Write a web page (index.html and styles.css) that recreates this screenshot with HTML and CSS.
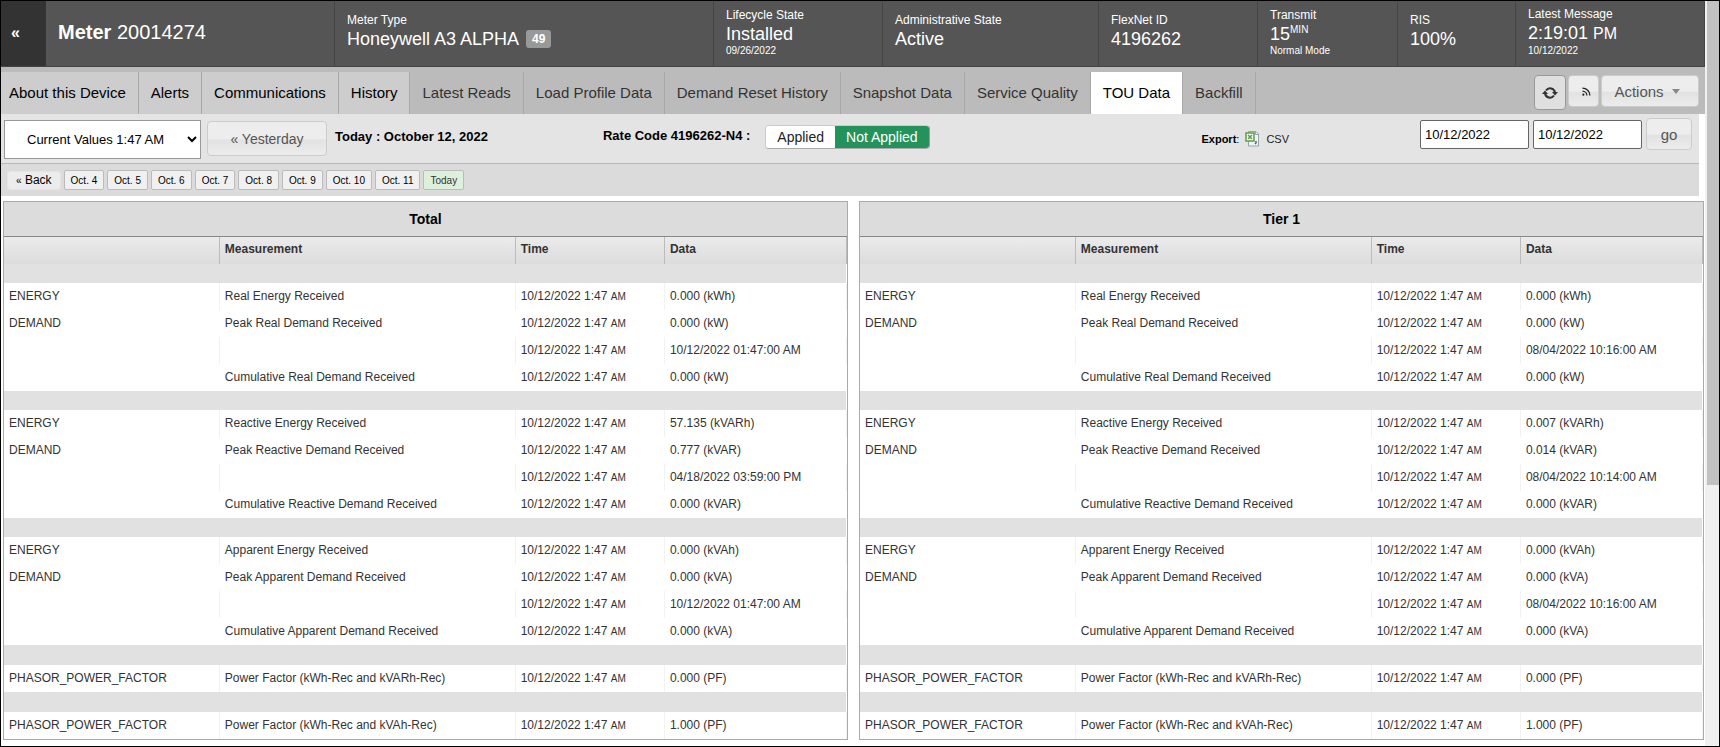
FILE: index.html
```html
<!DOCTYPE html>
<html lang="en">
<head>
<meta charset="utf-8">
<title>Meter 20014274 - TOU Data</title>
<link rel="stylesheet" href="styles.css">
</head>
<body>
<div class="frame">
<div class="page">
  <header class="summary">
    <button class="collapse" type="button" aria-label="Collapse">«</button>
    <div class="fact"><h1 class="meter-name"><b>Meter</b> 20014274</h1></div>
    <div class="fact"><span class="label">Meter Type</span><span class="value">Honeywell A3 ALPHA <span class="badge">49</span></span></div>
    <div class="fact"><span class="label">Lifecycle State</span><span class="value">Installed</span><span class="note">09/26/2022</span></div>
    <div class="fact"><span class="label">Administrative State</span><span class="value">Active</span></div>
    <div class="fact"><span class="label">FlexNet ID</span><span class="value">4196262</span></div>
    <div class="fact"><span class="label">Transmit</span><span class="value">15<sup class="unit">MIN</sup></span><span class="note">Normal Mode</span></div>
    <div class="fact"><span class="label">RIS</span><span class="value">100%</span></div>
    <div class="fact"><span class="label">Latest Message</span><span class="value">2:19:01 <span class="ampm">PM</span></span><span class="note">10/12/2022</span></div>
  </header>

  <nav class="tabbar">
    <div class="tabs">
      <a class="tab main" href="#">About this Device</a>
      <a class="tab main" href="#">Alerts</a>
      <a class="tab main" href="#">Communications</a>
      <a class="tab main" href="#">History</a>
      <a class="tab" href="#">Latest Reads</a>
      <a class="tab" href="#">Load Profile Data</a>
      <a class="tab" href="#">Demand Reset History</a>
      <a class="tab" href="#">Snapshot Data</a>
      <a class="tab" href="#">Service Quality</a>
      <a class="tab active" href="#">TOU Data</a>
      <a class="tab" href="#">Backfill</a>
    </div>
    <div class="tools">
      <button class="btn refresh" type="button" aria-label="Refresh">
        <svg width="16" height="14" viewBox="0 0 16 14" fill="none" stroke="#333" stroke-width="2"><path d="M4 4.500A5 5 0 0 1 13 6.500M12 9.500A5 5 0 0 1 3 7.500"/><path d="M10 6h6L13 9.500zM0 8h6L3 4.500z" fill="#333" stroke="none"/></svg>
      </button>
      <button class="btn feed" type="button" aria-label="Feed">
        <svg width="9" height="9" viewBox="0 0 10 10" fill="none" stroke="#222" stroke-width="1.400"><circle cx="1.500" cy="8.500" r="1.200" fill="#222" stroke="none"/><path d="M0.500 4.500A5 5 0 0 1 5.500 9.500M0.500 1.200A8.300 8.300 0 0 1 8.800 9.500"/></svg>
      </button>
      <button class="btn actions" type="button">Actions <svg width="8" height="5" viewBox="0 0 8 5"><path d="M0 0h8L4 5z" fill="#888"/></svg></button>
    </div>
  </nav>

  <div class="filters">
    <select class="values" aria-label="Values"><option>Current Values 1:47 AM</option></select>
    <button class="btn yesterday" type="button">« Yesterday</button>
    <strong class="today">Today : October 12, 2022</strong>
    <div class="rate">
      <strong>Rate Code 4196262-N4 :</strong>
      <div class="toggle"><button type="button">Applied</button><button class="on" type="button">Not Applied</button></div>
    </div>
    <div class="export"><span><b>Export</b>:</span>
      <a class="csv" href="#"><svg width="15" height="17" viewBox="0 0 15 17"><path d="M3.500 1.500h7.500l2.500 2.500v12H3.500z" fill="#eef3f6" stroke="#91a5ab"/><path d="M10.500 1.500v3h3" fill="none" stroke="#91a5ab"/><rect x="1" y="3" width="8" height="8" fill="#fff" stroke="#5d9b4a" stroke-width="1.500"/><path d="M3 5l4 4M7 5L3 9" stroke="#5d9b4a" stroke-width="1.500"/><path d="M11 11v2l-1 1" stroke="#4f6a75" stroke-width="1.500" fill="none"/></svg>CSV</a>
    </div>
    <form class="range">
      <input type="text" value="10/12/2022" aria-label="From date">
      <input type="text" value="10/12/2022" aria-label="To date">
      <button class="btn go" type="button">go</button>
    </form>
  </div>

  <div class="days">
    <button class="back" type="button"><small>«</small> Back</button>
    <button class="day" type="button">Oct. 4</button>
    <button class="day" type="button">Oct. 5</button>
    <button class="day" type="button">Oct. 6</button>
    <button class="day" type="button">Oct. 7</button>
    <button class="day" type="button">Oct. 8</button>
    <button class="day" type="button">Oct. 9</button>
    <button class="day" type="button">Oct. 10</button>
    <button class="day" type="button">Oct. 11</button>
    <button class="day current" type="button">Today</button>
  </div>

  <main class="panels">
    <table class="readings">
      <colgroup><col class="c-kind"><col class="c-measure"><col class="c-time"><col class="c-data"></colgroup>
      <thead>
        <tr class="title"><th colspan="4">Total</th></tr>
        <tr class="heads"><th></th><th>Measurement</th><th>Time</th><th>Data</th></tr>
      </thead>
      <tbody>
        <tr class="gap"><td colspan="4"></td></tr>
        <tr><td>ENERGY</td><td>Real Energy Received</td><td>10/12/2022 1:47 <small>AM</small></td><td>0.000 (kWh)</td></tr>
        <tr><td>DEMAND</td><td>Peak Real Demand Received</td><td>10/12/2022 1:47 <small>AM</small></td><td>0.000 (kW)</td></tr>
        <tr><td></td><td></td><td>10/12/2022 1:47 <small>AM</small></td><td>10/12/2022 01:47:00 AM</td></tr>
        <tr><td></td><td>Cumulative Real Demand Received</td><td>10/12/2022 1:47 <small>AM</small></td><td>0.000 (kW)</td></tr>
      </tbody>
      <tbody>
        <tr class="gap"><td colspan="4"></td></tr>
        <tr><td>ENERGY</td><td>Reactive Energy Received</td><td>10/12/2022 1:47 <small>AM</small></td><td>57.135 (kVARh)</td></tr>
        <tr><td>DEMAND</td><td>Peak Reactive Demand Received</td><td>10/12/2022 1:47 <small>AM</small></td><td>0.777 (kVAR)</td></tr>
        <tr><td></td><td></td><td>10/12/2022 1:47 <small>AM</small></td><td>04/18/2022 03:59:00 PM</td></tr>
        <tr><td></td><td>Cumulative Reactive Demand Received</td><td>10/12/2022 1:47 <small>AM</small></td><td>0.000 (kVAR)</td></tr>
      </tbody>
      <tbody>
        <tr class="gap"><td colspan="4"></td></tr>
        <tr><td>ENERGY</td><td>Apparent Energy Received</td><td>10/12/2022 1:47 <small>AM</small></td><td>0.000 (kVAh)</td></tr>
        <tr><td>DEMAND</td><td>Peak Apparent Demand Received</td><td>10/12/2022 1:47 <small>AM</small></td><td>0.000 (kVA)</td></tr>
        <tr><td></td><td></td><td>10/12/2022 1:47 <small>AM</small></td><td>10/12/2022 01:47:00 AM</td></tr>
        <tr><td></td><td>Cumulative Apparent Demand Received</td><td>10/12/2022 1:47 <small>AM</small></td><td>0.000 (kVA)</td></tr>
      </tbody>
      <tbody class="single">
        <tr class="gap"><td colspan="4"></td></tr>
        <tr><td>PHASOR_POWER_FACTOR</td><td>Power Factor (kWh-Rec and kVARh-Rec)</td><td>10/12/2022 1:47 <small>AM</small></td><td>0.000 (PF)</td></tr>
      </tbody>
      <tbody class="single">
        <tr class="gap"><td colspan="4"></td></tr>
        <tr><td>PHASOR_POWER_FACTOR</td><td>Power Factor (kWh-Rec and kVAh-Rec)</td><td>10/12/2022 1:47 <small>AM</small></td><td>1.000 (PF)</td></tr>
      </tbody>
    </table>

    <table class="readings">
      <colgroup><col class="c-kind"><col class="c-measure"><col class="c-time"><col class="c-data"></colgroup>
      <thead>
        <tr class="title"><th colspan="4">Tier 1</th></tr>
        <tr class="heads"><th></th><th>Measurement</th><th>Time</th><th>Data</th></tr>
      </thead>
      <tbody>
        <tr class="gap"><td colspan="4"></td></tr>
        <tr><td>ENERGY</td><td>Real Energy Received</td><td>10/12/2022 1:47 <small>AM</small></td><td>0.000 (kWh)</td></tr>
        <tr><td>DEMAND</td><td>Peak Real Demand Received</td><td>10/12/2022 1:47 <small>AM</small></td><td>0.000 (kW)</td></tr>
        <tr><td></td><td></td><td>10/12/2022 1:47 <small>AM</small></td><td>08/04/2022 10:16:00 AM</td></tr>
        <tr><td></td><td>Cumulative Real Demand Received</td><td>10/12/2022 1:47 <small>AM</small></td><td>0.000 (kW)</td></tr>
      </tbody>
      <tbody>
        <tr class="gap"><td colspan="4"></td></tr>
        <tr><td>ENERGY</td><td>Reactive Energy Received</td><td>10/12/2022 1:47 <small>AM</small></td><td>0.007 (kVARh)</td></tr>
        <tr><td>DEMAND</td><td>Peak Reactive Demand Received</td><td>10/12/2022 1:47 <small>AM</small></td><td>0.014 (kVAR)</td></tr>
        <tr><td></td><td></td><td>10/12/2022 1:47 <small>AM</small></td><td>08/04/2022 10:14:00 AM</td></tr>
        <tr><td></td><td>Cumulative Reactive Demand Received</td><td>10/12/2022 1:47 <small>AM</small></td><td>0.000 (kVAR)</td></tr>
      </tbody>
      <tbody>
        <tr class="gap"><td colspan="4"></td></tr>
        <tr><td>ENERGY</td><td>Apparent Energy Received</td><td>10/12/2022 1:47 <small>AM</small></td><td>0.000 (kVAh)</td></tr>
        <tr><td>DEMAND</td><td>Peak Apparent Demand Received</td><td>10/12/2022 1:47 <small>AM</small></td><td>0.000 (kVA)</td></tr>
        <tr><td></td><td></td><td>10/12/2022 1:47 <small>AM</small></td><td>08/04/2022 10:16:00 AM</td></tr>
        <tr><td></td><td>Cumulative Apparent Demand Received</td><td>10/12/2022 1:47 <small>AM</small></td><td>0.000 (kVA)</td></tr>
      </tbody>
      <tbody class="single">
        <tr class="gap"><td colspan="4"></td></tr>
        <tr><td>PHASOR_POWER_FACTOR</td><td>Power Factor (kWh-Rec and kVARh-Rec)</td><td>10/12/2022 1:47 <small>AM</small></td><td>0.000 (PF)</td></tr>
      </tbody>
      <tbody class="single">
        <tr class="gap"><td colspan="4"></td></tr>
        <tr><td>PHASOR_POWER_FACTOR</td><td>Power Factor (kWh-Rec and kVAh-Rec)</td><td>10/12/2022 1:47 <small>AM</small></td><td>1.000 (PF)</td></tr>
      </tbody>
    </table>
  </main>
</div>
<div class="scroll"><div class="thumb"></div></div>
</div>
</body>
</html>
```
FILE: styles.css
```css
* { box-sizing: border-box; }
body { margin: 0; background: #fff; color: #000; font: 12px/14px "Liberation Sans", Arial, sans-serif; }
button, input, select { font-family: inherit; margin: 0; }
a { color: inherit; text-decoration: none; }

.frame { display: flex; min-height: 100vh; border: 1px solid #000; }
.page { flex: 1; min-width: 0; }
.scroll { width: 14px; padding-left: 2px; background: #f0f0f0; }
.thumb { height: 65%; background: #c1c1c1; }

/* Device summary */
.summary { display: grid; grid-template-columns: 45px 289fr 379fr 169fr 216fr 159fr 140fr 118fr 189fr; height: 66px; background: #555; border-bottom: 1px solid #444; color: #fff; }
.collapse { padding: 0 16px 2px 0; border: 0; background: #333; color: #fff; font-size: 16px; font-weight: bold; }
.fact { display: flex; flex-direction: column; justify-content: center; padding: 0 12px 4px; border-right: 1px solid #444; white-space: nowrap; min-width: 0; }
.meter-name { margin: 0; font-size: 20px; line-height: 24px; font-weight: normal; }
.label { font-size: 12px; line-height: 14px; }
.value { font-size: 18px; line-height: 24px; }
.note { font-size: 10px; line-height: 10px; }
.unit { font-size: 10px; line-height: 10px; vertical-align: 7px; }
.ampm { font-size: 16px; }
.badge { display: inline-block; margin-left: 3px; padding: 2px 6px; border-radius: 3px; background: #999; font-size: 12px; line-height: 14px; font-weight: bold; vertical-align: 2px; }

/* Tabs */
.tabbar { display: flex; justify-content: space-between; height: 47px; padding-top: 5px; background: #bbb; }
.tabs { display: flex; white-space: nowrap; }
.tab { display: flex; align-items: center; padding: 0 12px; border-right: 1px solid #a8a8a8; font-size: 15px; color: #333; }
.tab:first-child { padding-left: 8px; }
.tab.main { background: #cdcdcd; color: #000; }
.tab.active { background: #fff; color: #000; }
.tools { display: flex; gap: 2px; padding: 3px 6px 0 0; align-items: flex-start; }
.btn { display: flex; align-items: center; justify-content: center; padding: 0; border: 1px solid #ccc; border-radius: 4px; background: linear-gradient(#ededed 50%, #e2e2e2 55%, #ececec); color: #555; font-size: 15px; }
.refresh { width: 32px; height: 35px; border-color: #999; background: #dfdfdf; }
.feed { width: 31px; height: 32px; padding-left: 5px; }
.actions { width: 98px; height: 32px; gap: 8px; padding-right: 6px; }

/* Filters */
.filters { display: flex; align-items: flex-start; height: 50px; margin-right: 6px; padding: 4px 7px 0 3px; background: #e4e4e4; border-bottom: 1px solid #b8b8b8; white-space: nowrap; }
.values { width: 197px; height: 39px; margin: 2px 6px 0 0; padding: 0 0 0 18px; border: 1px solid #999; border-radius: 0; background: #fff; color: #000; font-size: 13px; }
.yesterday { width: 120px; height: 35px; margin-top: 3px; font-size: 14px; }
.today { margin: 12px 115px 0 8px; font-size: 13px; }
.rate { display: flex; align-items: flex-start; gap: 15px; font-size: 13px; padding-top: 7px; }
.rate strong { padding-top: 4px; }
.toggle { display: flex; border: 1px solid #aaa; border-color: #ccc #999 #aaa #ccc; border-radius: 4px; overflow: hidden; }
.toggle button { padding: 0 11px; height: 22px; border: 0; background: #fff; color: #222; font-size: 14px; line-height: 22px; }
.toggle .on { background: #23935b; color: #fff; }
.export { display: flex; align-items: center; gap: 6px; margin: 12px 131px 0 auto; font-size: 11px; }
.csv { display: flex; align-items: center; gap: 6px; color: #222; }
.range { display: flex; gap: 4px; }
.range input { width: 109px; height: 29px; margin-top: 2px; padding: 0 4px; border: 1px solid #666; border-radius: 2px; background: #fff; color: #000; font-size: 13px; }
.go { width: 46px; height: 32px; }

/* Day picker */
.days { display: flex; align-items: center; gap: 3px; height: 32px; margin-right: 6px; padding: 0 6px; background: #dbdbdb; }
.back { height: 19px; padding: 0 8px 1px; border: 1px solid #e4e4e4; border-radius: 3px; background: #ececec; color: #000; font-size: 12px; }
.back small { font-size: 10px; }
.day { height: 20px; min-width: 40px; padding: 0 6px; border: 1px solid #bbb; border-radius: 2px; background: #f0f0f0; color: #000; font-size: 10px; }
.day.current { background: #dcf0dc; color: #333; }

/* Readings */
.panels { display: grid; grid-template-columns: 1fr 1fr; gap: 11px; padding: 5px 1px 5px 2px; }
.readings { width: 100%; table-layout: fixed; border: 1px solid #aaa; border-spacing: 0; border-collapse: separate; color: #333; }
.c-kind { width: 25.6%; }
.c-measure { width: 35.1%; }
.c-time { width: 17.7%; }
.c-data { width: 21.6%; }
.readings th, .readings td { height: 27px; padding: 0 5px 1px; text-align: left; white-space: nowrap; }
.readings .title th { height: 35px; border-bottom: 1px solid #888; background: #dcdcdc; color: #000; font-size: 14px; text-align: center; }
.readings .heads th { height: 27px; padding-bottom: 3px; border-right: 1px solid #bbb; background: linear-gradient(#ebebeb, #dcdcdc); }
.readings td { border-right: 1px solid #fff; }
.readings tr:nth-child(even) td { border-right-color: #f2f2f2; }
.readings .gap td { height: 19px; padding: 0; background: #e1e1e1; }
.readings .single .gap td { height: 20px; }
.readings small { font-size: 10px; line-height: 10px; }
```
